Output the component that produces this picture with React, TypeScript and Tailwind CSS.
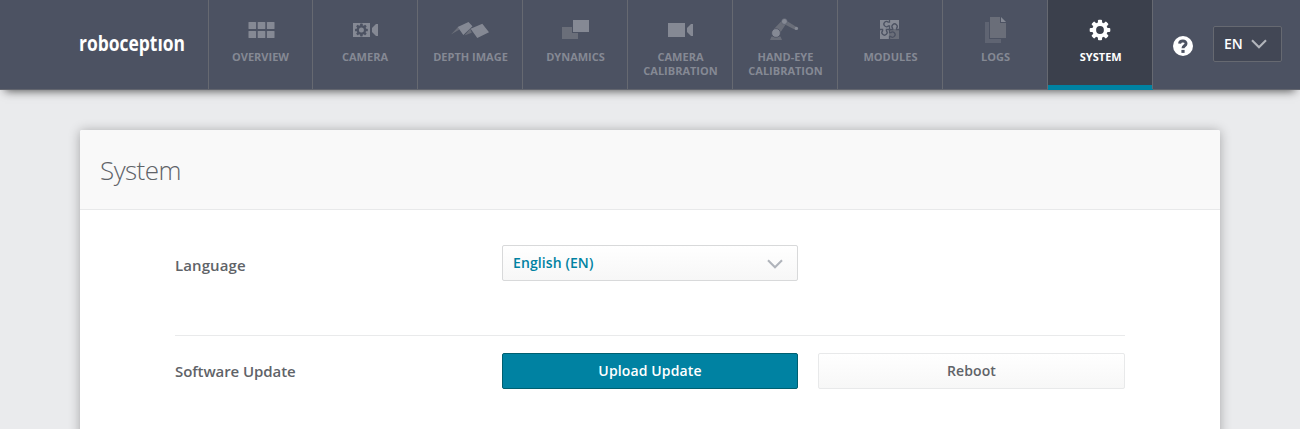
import type { ReactNode } from "react";

function Gear({ cx, cy, r, fill, hole }: { cx: number; cy: number; r: number; fill: string; hole: number }) {
  const teeth = [0, 45, 90, 135, 180, 225, 270, 315];
  return (
    <g>
      <circle cx={cx} cy={cy} r={(r * 0.75 + hole) / 2} fill="none" stroke={fill} strokeWidth={r * 0.75 - hole} />
      {teeth.map((a) => (
        <rect key={a} x={cx - r * 0.2} y={cy - r} width={r * 0.4} height={r * 0.4} rx={r * 0.1} fill={fill} transform={`rotate(${a} ${cx} ${cy})`} />
      ))}
    </g>
  );
}

function Icon({ children }: { children: ReactNode }) {
  return (
    <svg width="40" height="30" viewBox="0 0 40 30" className="block shrink-0">
      {children}
    </svg>
  );
}

const light = "#858994";
const dark = "#6a6e79";
const bar = "#4c5262";

const overview = (
  <Icon>
    {[7.5, 16.7, 25.9].map((x) =>
      [7, 16].map((y) => <rect key={`${x}-${y}`} x={x} y={y} width="7.6" height="7" rx="0.6" fill={light} />)
    )}
  </Icon>
);
const camera = (
  <Icon>
    <path d="M8 8h17v14H8zM27 13l4-4h2v12h-2l-4-4z" fill={light} />
    <Gear cx={16.4} cy={15} r={6.4} hole={2.5} fill={bar} />
  </Icon>
);
const depth = (
  <Icon>
    <path d="M1 19.5L8 12l1.5 2.5zM14.5 20.5l5.7-6.8 1.6 4z" fill={dark} />
    <path d="M7.7 12L18.5 7l4 4.2L13.3 20zM20.6 13.7L32.3 8.7 39 17.3 27.3 23z" fill={light} />
  </Icon>
);
const dynamics = (
  <Icon>
    <path d="M7 12h16v12H7z" fill={dark} />
    <path d="M17 4h18v14H17z" fill={bar} />
    <path d="M18 5h16v12H18z" fill={light} />
  </Icon>
);
const calibration = (
  <Icon>
    <path d="M8 8h17v14H8zM27 13l4-4h2v12h-2l-4-4z" fill={light} />
  </Icon>
);
const robot = (
  <Icon>
    <path d="M5 25l1.5-3.500h9L17 25zM8 15l8.500-9 4.500 3-6 9zM19.500 4.500l12 7.500-1 3L19 9z" fill={dark} />
    <circle cx="11" cy="18" r="4.4" fill={light} stroke={bar} strokeWidth="0.8" />
    <circle cx="19.4" cy="6.5" r="2.9" fill={light} stroke={bar} strokeWidth="0.5" />
    <circle cx="31.4" cy="13.4" r="1.7" fill={light} />
  </Icon>
);
const modules = (
  <Icon>
    <path d="M10 5h19v9.500H10zM10 14.500h9.500V24H10z" fill={light} />
    <path d="M19.500 14.500H29V24h-9.500z" fill={dark} />
    <g fill="none" stroke={bar} strokeWidth="1.3">
      <path d="M19.500 5v2.200h-1.200a2.600 2.600 0 1 0 0 3.800h1.200v3.500" />
      <path d="M19.500 14.500h3.200v-1.200a2.600 2.600 0 1 1 3.800 0v1.200H29" />
      <path d="M10 14.500h2.600v1.200a2.600 2.600 0 1 0 3.800 0v-1.200h3.100" />
      <path d="M19.500 14.500v3.200h1.200a2.600 2.600 0 1 1 0 3.800h-1.200V24" />
    </g>
  </Icon>
);
const logs = (
  <Icon>
    <path d="M10 7h16v21H10z" fill="#5f6472" />
    <path d="M14 1h12.500L32 6.500V24H14z" fill={bar} />
    <path d="M15 2h10v6h6v15H15z" fill={dark} />
    <path d="M26 2l5 5h-5z" fill={light} />
  </Icon>
);
const system = (
  <Icon>
    <Gear cx={20} cy={15} r={10.3} hole={3.9} fill="#ffffff" />
  </Icon>
);

const items: { label: string; icon: ReactNode; active?: boolean }[] = [
  { label: "OVERVIEW", icon: overview },
  { label: "CAMERA", icon: camera },
  { label: "DEPTH IMAGE", icon: depth },
  { label: "DYNAMICS", icon: dynamics },
  { label: "CAMERA CALIBRATION", icon: calibration },
  { label: "HAND-EYE CALIBRATION", icon: robot },
  { label: "MODULES", icon: modules },
  { label: "LOGS", icon: logs },
  { label: "SYSTEM", icon: system, active: true },
];

function Chevron({ color }: { color: string }) {
  return (
    <svg width="16" height="10" viewBox="0 0 16 10" className="block shrink-0">
      <path d="M1 1.200l7 7 7-7" fill="none" stroke={color} strokeWidth="2.1" />
    </svg>
  );
}

export default function App() {
  return (
    <div className="flex h-[429px] w-[1300px] flex-col overflow-hidden bg-[#eaebed] font-['Open_Sans',sans-serif] text-[#5f6368]">
      <header className="z-10 flex h-[90px] shrink-0 border-b border-[#62656e] bg-[#4c5262] shadow-[0_6px_9px_-5px_rgba(0,0,0,0.65)]">
        <div className="flex w-[209px] border-r border-[#666971] pt-[22px] pl-[75px]">
          <svg width="130" height="44" viewBox="0 0 130 44" className="block overflow-visible">
            <text x="4" y="28.8" fontFamily="'Open Sans', sans-serif" fontSize="21" fontWeight="700" fill="#fff" textLength="106" lengthAdjust="spacingAndGlyphs">
              roboceptıon
            </text>
          </svg>
        </div>
        <nav className="flex">
          {items.map((it, i) => (
            <a
              key={it.label}
              className={`${i === 0 ? "w-[104px]" : "w-[105px]"} ${
                it.active ? "bg-[#3b404c] text-white shadow-[inset_0_-4px_0_#0082a2,0_1px_0_#0082a2]" : "text-[#858994]"
              } flex flex-col items-center border-r border-[#666971] pt-[15px] text-center text-[11px] leading-[14px] font-bold`}
            >
              {it.icon}
              <span className={`${it.active ? "pl-[1.5px]" : i > 1 ? "pl-px" : ""} mt-[5px] w-[90px]`}>{it.label}</span>
            </a>
          ))}
        </nav>
        <div className="flex grow pl-[20px]">
          <svg width="20" height="20" viewBox="0 0 20 20" className="mt-[36px] block">
            <circle cx="10" cy="10" r="10" fill="#fff" />
            <path d="M6.6 7.700C6.800 3.900 13.200 4.200 13 7.600c-.1 2.200-3 2.200-3 4.700" fill="none" stroke={bar} strokeWidth="3" />
            <path d="M8.400 13.900h3.200v3H8.400z" fill={bar} />
          </svg>
          <div className="mt-[26px] ml-[20px] flex h-[36px] w-[69px] items-center rounded-[2px] border border-[#666971] bg-[#424755] pl-[10px] text-sm font-semibold text-white">
            <span className="w-[27px]">EN</span>
            <Chevron color="#b2b5bb" />
          </div>
        </div>
      </header>
      <main className="mx-auto mt-[40px] h-[500px] w-[1140px] shrink-0 rounded-[2px] bg-white shadow-[0_1px_12px_rgba(0,0,0,0.3)]">
        <div className="flex h-[80px] items-center rounded-t-[2px] border-b border-[#e8e9ea] bg-[#f9f9f9] px-5">
          <h1 className="text-[26px] leading-[36px] font-light tracking-[-0.55px]">System</h1>
        </div>
        <div className="px-[95px]">
          <div className="flex h-[126px] border-b border-[#e9eaeb] pt-[35px]">
            <span className="w-[327px] pt-[10px] text-[15px] leading-[20px] font-semibold tracking-[0.1px]">Language</span>
            <div className="flex h-[36px] w-[296px] items-center justify-between rounded-[2px] border border-[#d8d9da] bg-linear-to-b from-white to-[#f7f7f7] pr-[14px] pl-[10px] text-sm font-semibold text-[#0082a2]">
              <span className="tracking-[0.1px]">English (EN)</span>
              <div className="pt-[2px]">
                <Chevron color="#b0b4bb" />
              </div>
            </div>
          </div>
          <div className="flex pt-[17px]">
            <span className="w-[327px] pt-[8px] text-[15px] leading-[20px] font-semibold tracking-[-0.08px]">Software Update</span>
            <button className="h-[36px] w-[296px] rounded-[2px] border border-[#005f70] bg-[#0082a2] text-sm font-semibold tracking-[0.13px] text-white">Upload Update</button>
            <button className="ml-5 h-[36px] w-[307px] rounded-[2px] border border-[#e8e9ea] bg-linear-to-b from-white to-[#f7f7f7] text-sm font-semibold tracking-[0.1px]">Reboot</button>
          </div>
        </div>
      </main>
    </div>
  );
}
